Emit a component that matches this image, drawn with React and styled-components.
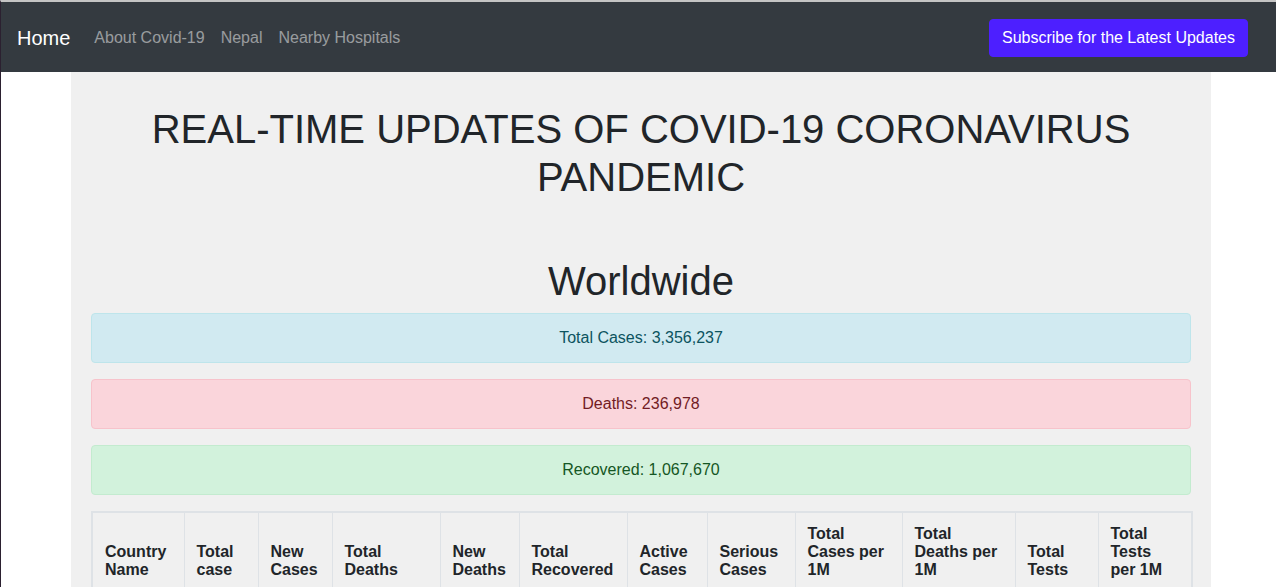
import React from "react";
import styled, { createGlobalStyle } from "styled-components";

const Global = createGlobalStyle`
  html, body { margin: 0; padding: 0; background: #fff; }
  body {
    font-family: "Liberation Sans", Arial, sans-serif;
    font-size: 16px;
    line-height: 1.5;
    color: #212529;
    border-top: 2px solid #c4c4c4;
    border-left: 1px solid #2b2030;
    overflow: hidden;
  }
  * { box-sizing: border-box; }
`;

const Navbar = styled.nav`
  display: flex;
  align-items: center;
  justify-content: space-between;
  height: 70px;
  background: #343a40;
  padding: 2px 28px 0 16px;
`;

const NavLeft = styled.div`
  display: flex;
  align-items: center;
`;

const Brand = styled.a`
  font-size: 20px;
  line-height: 30px;
  color: #fff;
  margin-right: 16px;
  text-decoration: none;
`;

const NavLink = styled.a`
  color: rgba(255, 255, 255, 0.5);
  padding: 8px;
  text-decoration: none;
  line-height: 24px;
`;

const SubscribeButton = styled.button`
  font-family: inherit;
  font-size: 16px;
  line-height: 24px;
  padding: 6px 12px;
  border: 1px solid #4d1fff;
  border-radius: 4px;
  background: #4d1fff;
  color: #fff;
`;

const Container = styled.main`
  width: 1140px;
  margin-left: 70px;
  background: #f0f0f0;
  padding: 33px 20px 0;
`;

const Title = styled.h1`
  font-size: 40px;
  font-weight: 400;
  line-height: 1.2;
  text-align: center;
  margin: 0 0 ${(p) => p.$mb || 0}px;
  margin-top: ${(p) => p.$mt || 0}px;
`;

const ALERTS = {
  info: { bg: "#d1eaf1", border: "#bee5eb", color: "#0c5460" },
  danger: { bg: "#fad5db", border: "#f7c3cb", color: "#721c24" },
  success: { bg: "#d2f2dc", border: "#c3ebcf", color: "#155724" },
};

const Alert = styled.div`
  background: ${(p) => ALERTS[p.$kind].bg};
  border: 1px solid ${(p) => ALERTS[p.$kind].border};
  color: ${(p) => ALERTS[p.$kind].color};
  border-radius: 4px;
  padding: 12px 20px;
  margin-bottom: 16px;
  text-align: center;
  line-height: 24px;
`;

const Table = styled.table`
  width: 1100px;
  border-collapse: collapse;
  table-layout: fixed;
  border: 2px solid #dee2e6;
`;

const Th = styled.th`
  border: 1px solid #dee2e6;
  border-bottom-width: 2px;
  padding: 12px 11px 12px 12px;
  text-align: left;
  vertical-align: bottom;
  font-weight: 700;
  line-height: 18px;
  color: #212529;
`;

const Td = styled.td`
  border: 1px solid #dee2e6;
  padding: 12px;
  height: 60px;
`;

const columns = [
  ["Country Name", 92],
  ["Total case", 74],
  ["New Cases", 74],
  ["Total Deaths", 108],
  ["New Deaths", 79],
  ["Total Recovered", 108],
  ["Active Cases", 80],
  ["Serious Cases", 88],
  ["Total Cases per 1M", 107],
  ["Total Deaths per 1M", 113],
  ["Total Tests", 83],
  ["Total Tests per 1M", 94],
];

export default function App() {
  return (
    <>
      <Global />
      <Navbar>
        <NavLeft>
          <Brand href="#">Home</Brand>
          <NavLink href="#">About Covid-19</NavLink>
          <NavLink href="#">Nepal</NavLink>
          <NavLink href="#">Nearby Hospitals</NavLink>
        </NavLeft>
        <SubscribeButton>Subscribe for the Latest Updates</SubscribeButton>
      </Navbar>
      <Container>
        <Title>REAL-TIME UPDATES OF COVID-19 CORONAVIRUS PANDEMIC</Title>
        <Title $mt={56} $mb={8}>Worldwide</Title>
        <Alert $kind="info">Total Cases: 3,356,237</Alert>
        <Alert $kind="danger">Deaths: 236,978</Alert>
        <Alert $kind="success">Recovered: 1,067,670</Alert>
        <Table>
          <colgroup>
            {columns.map(([n, w]) => (
              <col key={n} style={{ width: w }} />
            ))}
          </colgroup>
          <thead>
            <tr>
              {columns.map(([n]) => (
                <Th key={n}>{n}</Th>
              ))}
            </tr>
          </thead>
          <tbody>
            <tr>
              {columns.map(([n]) => (
                <Td key={n} />
              ))}
            </tr>
          </tbody>
        </Table>
      </Container>
    </>
  );
}
